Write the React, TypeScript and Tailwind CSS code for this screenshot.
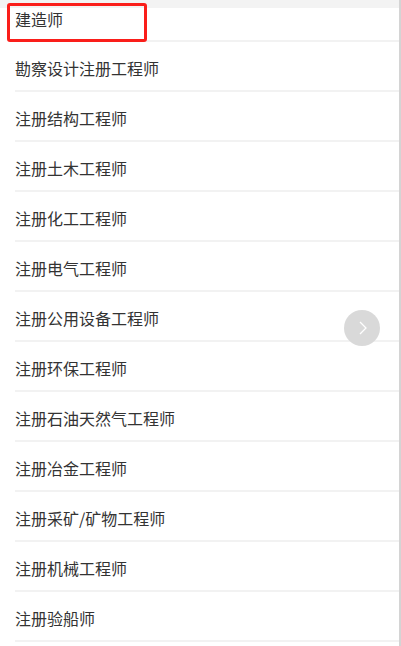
import React from 'react';

const items = [
  '勘察设计注册工程师',
  '注册结构工程师',
  '注册土木工程师',
  '注册化工工程师',
  '注册电气工程师',
  '注册公用设备工程师',
  '注册环保工程师',
  '注册石油天然气工程师',
  '注册冶金工程师',
  '注册采矿/矿物工程师',
  '注册机械工程师',
  '注册验船师',
];

export default function App() {
  return (
    <div
      className="relative w-[401px] h-[646px] overflow-hidden bg-white text-[#333333]"
      style={{ fontFamily: '"Noto Sans CJK SC", "Noto Sans", sans-serif' }}
    >
      {/* top strip */}
      <div className="h-2 bg-[#f3f3f3]" />

      {/* list */}
      <div className="pl-[15px] pr-[2px]">
        <div className="h-[34px] border-b-2 border-[#f2f2f2] text-[16px] leading-[22px]">
          建造师
        </div>
        {items.map((name) => (
          <div
            key={name}
            className="h-[50px] flex items-center pt-[3px] border-b-2 border-[#f2f2f2] text-[16px]"
          >
            {name}
          </div>
        ))}
      </div>

      {/* scrollbar edge */}
      <div className="absolute top-0 right-0 w-[2px] h-full bg-[#d4d4d4]" />

      {/* selection highlight */}
      <div className="absolute left-[7px] top-[3px] w-[140px] h-[39px] border-[3px] border-[#fa1e1a] rounded-[3px]" />

      {/* floating next button */}
      <div className="absolute left-[344px] top-[310px] w-9 h-9 rounded-full bg-[#d9d9d9] flex items-center justify-center">
        <svg width="14" height="16" viewBox="0 0 14 16" fill="none">
          <path d="M5 2 L11 8 L5 14" stroke="#ffffff" strokeWidth="1.3" />
        </svg>
      </div>
    </div>
  );
}
